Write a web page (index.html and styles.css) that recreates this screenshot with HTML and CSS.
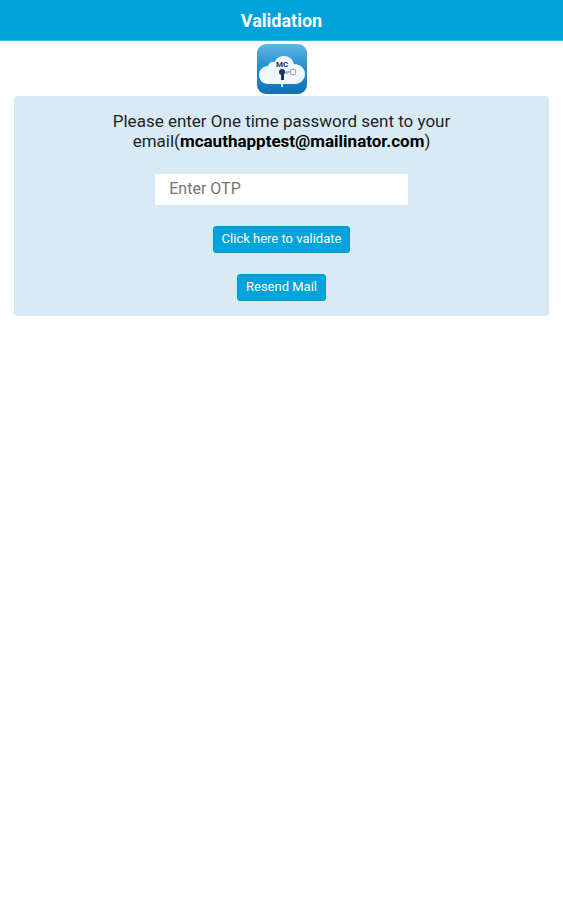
FILE: index.html
```html
<!DOCTYPE html>
<html lang="en">
  <head>
    <meta charset="UTF-8" />
    <meta name="viewport" content="width=device-width, initial-scale=1.0" />
    <title>Validation</title>
    <link rel="stylesheet" href="styles.css">
  </head>
  <body>
    <header class="header">
      <h1>Validation</h1>
    </header>

    <main class="content">
      <svg class="logo" viewBox="0 0 50 50" role="img" aria-label="MC Auth">
        <defs>
          <linearGradient id="logo-bg" x1="0" y1="0" x2="0" y2="1">
            <stop offset="0" stop-color="#62b5e3" />
            <stop offset="0.4" stop-color="#2b93d1" />
            <stop offset="1" stop-color="#0e72b4" />
          </linearGradient>
        </defs>
        <rect width="50" height="50" rx="9" fill="url(#logo-bg)" />
        <path
          d="M11 40C6 40 2 36 2 31C2 26 6 22 11 22C12 18 15 17 18 18C19 14 23 12 27 12C32 12 36 15 37 20C43 20 48 24 48 30C48 36 43 40 38 40Z"
          fill="#eef8fd"
        />
        <text class="logo-text" x="25" y="23" text-anchor="middle">MC</text>
        <circle cx="25" cy="28" r="3" fill="#1d3454" />
        <path d="M24 29H27V36H24Z" fill="#1d3454" />
        <path d="M25 39V43" stroke="#eef8fd" stroke-width="2" />
        <path d="M28 28H33M30 28V30" stroke="#7b8a96" stroke-width="1" />
        <circle cx="36" cy="28" r="3" fill="none" stroke="#8a98a3" stroke-width="1" />
      </svg>

      <form class="panel">
        <label class="message" for="otp">
          Please enter One time password sent to your
          email(<strong>mcauthapptest@mailinator.com</strong>)
        </label>
        <input class="otp" id="otp" type="text" placeholder="Enter OTP" autocomplete="one-time-code" />
        <button class="btn" type="submit">Click here to validate</button>
        <button class="btn" type="button">Resend Mail</button>
      </form>
    </main>
  </body>
</html>
```

FILE: styles.css
```css
* {
  margin: 0;
  padding: 0;
  box-sizing: border-box;
  font-family: Roboto, "Liberation Sans", sans-serif;
}

body {
  background: white;
  color: #1c2327;
}

.header {
  padding: 11px 16px 9px;
  background: #02a2db;
  border-bottom: 1px solid #3cb5e2;
  color: white;
  text-align: center;
}

.header h1 {
  font-size: 18px;
  line-height: 20px;
  font-weight: 700;
}

.content {
  padding: 0 14px;
}

.logo {
  display: block;
  width: 50px;
  height: 50px;
  margin: 3px auto 2px;
}

.logo-text {
  font-size: 8px;
  font-weight: 700;
  fill: #1d3454;
}

.panel {
  display: flex;
  flex-direction: column;
  align-items: center;
  padding: 14px;
  background: #d8ebf5;
  border: 1px solid #cdebf3;
  border-radius: 3px;
}

.message {
  max-width: 360px;
  margin-bottom: 23px;
  font-size: 17px;
  line-height: 20px;
  text-align: center;
}

.message strong {
  font-weight: 700;
  color: black;
}

.otp {
  width: 50%;
  height: 31px;
  padding: 0 14px 3px;
  margin-bottom: 21px;
  background: white;
  border: none;
  font-size: 16px;
  color: #1c2327;
}

.otp::placeholder {
  color: #757575;
}

.btn {
  padding: 4px 8px 6px;
  background: #02a2db;
  border: 1px solid #0698cf;
  border-radius: 3px;
  color: white;
  font-size: 13px;
  line-height: 15px;
  cursor: pointer;
}

.btn + .btn {
  margin-top: 21px;
}
```
